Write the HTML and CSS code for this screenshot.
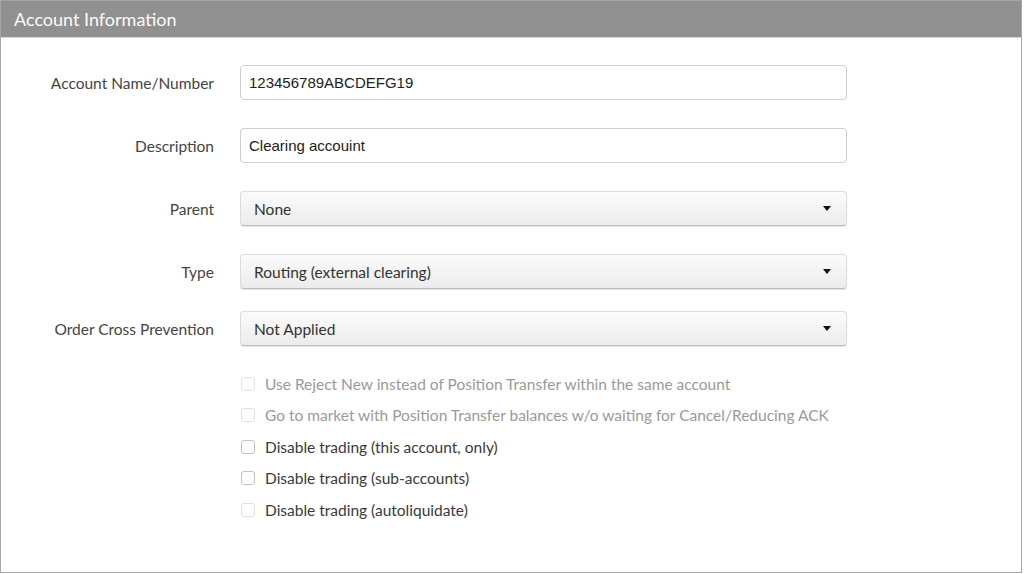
FILE: index.html
```html
<!DOCTYPE html>
<html lang="en">
<head>
<meta charset="utf-8">
<title>Account Information</title>
<link rel="stylesheet" href="styles.css">
</head>
<body>
<section class="panel">
  <header class="panel-head">Account Information</header>
  <div class="panel-body">
    <div class="form">
      <label class="lbl r1">Account Name/Number</label>
      <div class="field text r1">123456789ABCDEFG19</div>

      <label class="lbl r2">Description</label>
      <div class="field text r2">Clearing accouint</div>

      <label class="lbl r3">Parent</label>
      <div class="field select r3"><span>None</span><i class="caret"></i></div>

      <label class="lbl r4">Type</label>
      <div class="field select r4"><span>Routing (external clearing)</span><i class="caret"></i></div>

      <label class="lbl r5">Order Cross Prevention</label>
      <div class="field select r5"><span>Not Applied</span><i class="caret"></i></div>
    </div>

    <ul class="checks">
      <li class="check disabled"><span class="box"></span>Use Reject New instead of Position Transfer within the same account</li>
      <li class="check disabled"><span class="box"></span>Go to market with Position Transfer balances w/o waiting for Cancel/Reducing ACK</li>
      <li class="check"><span class="box"></span>Disable trading (this account, only)</li>
      <li class="check"><span class="box"></span>Disable trading (sub-accounts)</li>
      <li class="check disabled-box"><span class="box"></span>Disable trading (autoliquidate)</li>
    </ul>
  </div>
</section>
</body>
</html>
```
FILE: styles.css
```css
html, body {
  margin: 0;
  padding: 0;
  background: #ffffff;
}

body {
  font-family: Lato, "Open Sans", "Liberation Sans", sans-serif;
  color: #3a3a3a;
  width: 1024px;
  height: 574px;
  overflow: hidden;
}

.panel {
  box-sizing: border-box;
  width: 1022px;
  height: 573px;
  border: 1px solid #a8a8a8;
  border-top: none;
  background: #ffffff;
}

.panel-head {
  height: 38px;
  box-sizing: border-box;
  background: #909090;
  border-top: 1px solid #a4a4a4;
  border-bottom: 1px solid #d4d4d4;
  color: #fbfbfb;
  font-size: 18px;
  line-height: 37px;
  padding-left: 13px;
}

.panel-body {
  padding-top: 27px;
}

.form {
  display: grid;
  grid-template-columns: 213px 607px;
  column-gap: 26px;
  align-items: center;
}

.lbl {
  text-align: right;
  font-size: 15.5px;
  color: #444444;
}

.r2, .r3, .r4 { margin-top: 28px; }
.r5 { margin-top: 22px; }

.field {
  box-sizing: border-box;
  height: 35px;
  border-radius: 4px;
  display: flex;
  align-items: center;
  padding-left: 8px;
  font-size: 15.5px;
  color: #222222;
}

.text {
  border: 1px solid #cfcfcf;
  background: #ffffff;
  font-family: "Liberation Sans", Arial, sans-serif;
  font-size: 15px;
}

.select {
  border: 1px solid #dcdcdc;
  border-bottom-color: #bdbdbd;
  background: linear-gradient(#fbfbfb, #ececec);
  box-shadow: 0 1px 1px rgba(0, 0, 0, 0.12);
  justify-content: space-between;
  padding-left: 13px;
  padding-right: 15px;
  color: #333333;
}

.caret {
  width: 0;
  height: 0;
  border-left: 4.5px solid transparent;
  border-right: 4.5px solid transparent;
  border-top: 5px solid #111111;
}

.checks {
  list-style: none;
  margin: 22px 0 0 240px;
  padding: 0;
}

.check {
  display: flex;
  align-items: center;
  height: 31.5px;
  font-size: 15.5px;
  color: #3a3a3a;
}

.check .box {
  box-sizing: border-box;
  width: 14px;
  height: 14px;
  border: 1px solid #c4c4c4;
  border-radius: 3px;
  margin-right: 10px;
  background: #ffffff;
}

.check.disabled {
  color: #9a9a9a;
}

.check.disabled .box,
.check.disabled-box .box {
  border-color: #e0e0e0;
}
```
